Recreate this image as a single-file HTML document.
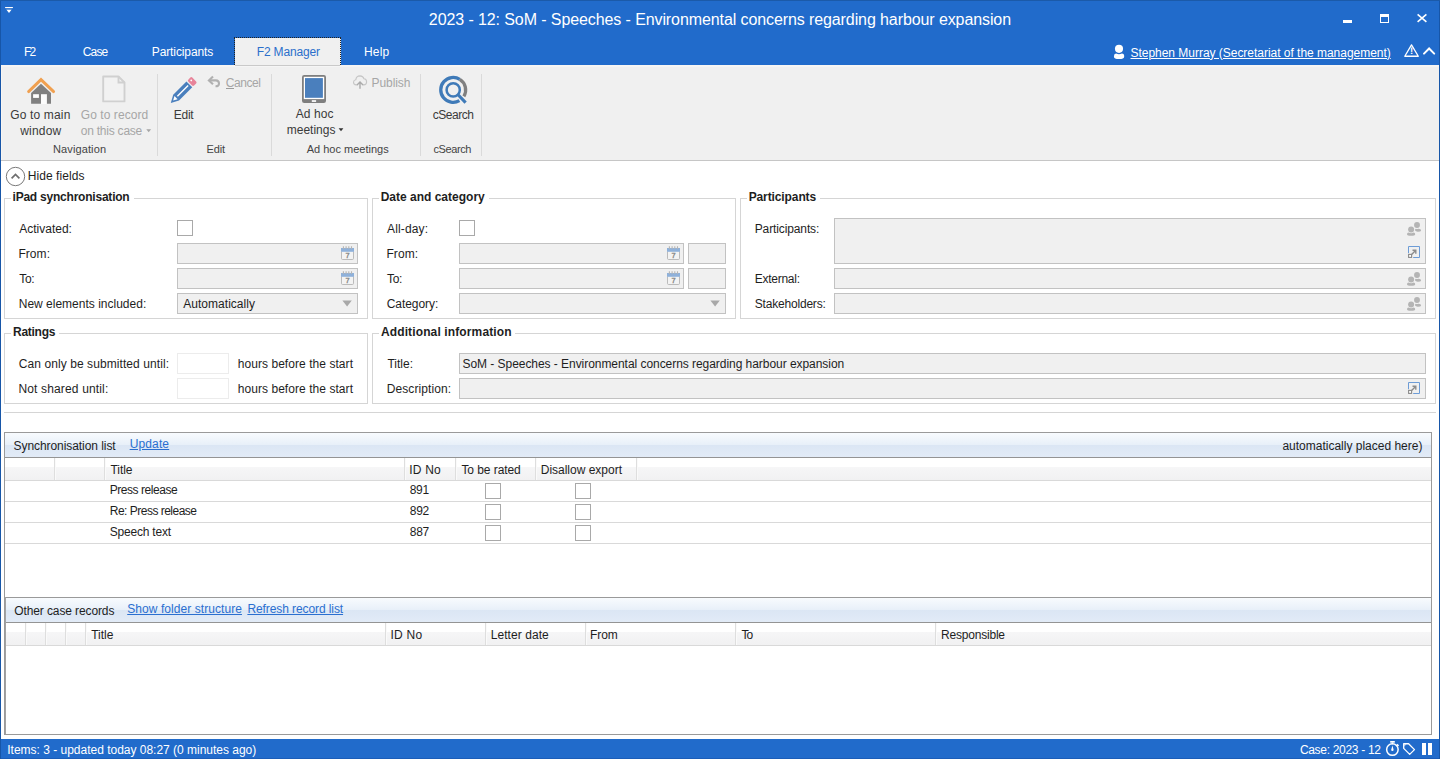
<!DOCTYPE html>
<html lang="en"><head><meta charset="utf-8"><title>F2 Manager</title>
<style>
html,body{margin:0;padding:0}
body{width:1440px;height:759px;position:relative;overflow:hidden;background:#fff;font-family:"Liberation Sans",sans-serif;font-size:12px;color:#1e1e1e}
.a,.t,svg{position:absolute}
.t{white-space:pre}
.blue{background:#216bcb}
.fs{border:1px solid #d5d5d5;box-sizing:border-box}
.lg{background:#fff;height:3px}
.in{box-sizing:border-box;border:1px solid #c2c2c2;background:#f0f0f0}
.inw{box-sizing:border-box;border:1px solid #ececec;background:#fff}
.cb{box-sizing:border-box;border:1px solid #a9a9a9;background:#fff;width:16px;height:16px}
.sep{width:1px;background:#dadada;top:74px;height:82px}
.ph{background:linear-gradient(#f8fbfe 0,#e8f0f9 48%,#dbe6f4 50%,#e2ebf7 100%)}
.ch{background:linear-gradient(#fff 0,#fff 41%,#f6f6f7 42%,#f1f1f2 100%)}
.cs{width:1px;background:#dedede;box-shadow:1px 0 0 #fafafa}
.hl{height:1px;background:#d9d9d9}

</style></head>
<body>
<header class="titlebar">
<!-- title + tabs -->
<div class="a blue" style="left:0;top:0;width:1440px;height:65px"></div>
<div class="a" style="left:0;top:0;width:1440px;height:1px;background:#1b5aa9"></div>
<!-- qat -->
<svg style="left:4px;top:6px" width="10" height="8" viewBox="4 6 10 8"><rect x="5.1" y="7" width="7.8" height="1.1" fill="#fff"/><rect x="6" y="8.6" width="6" height="1" fill="#fff" opacity=".15"/><path d="M6.5 9.8H11.5L9 12.9z" fill="#fff"/></svg>
<!-- window controls -->
<div class="a" style="left:1343px;top:20px;width:9px;height:3px;background:#fff"></div>
<div class="a" style="left:1380px;top:14px;width:9px;height:9px;box-sizing:border-box;border:1px solid #fff;border-top-width:3px"></div>
<svg style="left:1416px;top:13px" width="12" height="11" viewBox="0 0 12 11"><path d="M1.6 1.3L10.4 8.9M10.4 1.3L1.6 8.9" stroke="#fff" stroke-width="1.6" fill="none"/></svg>
<!-- active tab -->
<div class="a" style="left:235px;top:38px;width:106px;height:27px;background:#f0f0f0"></div>
<div class="a" style="left:234px;top:37px;width:107px;height:28px;box-sizing:border-box;border:1px dotted #222;border-bottom:none"></div>
<!-- user -->
<svg style="left:1112px;top:43px" width="14" height="17" viewBox="1112 43 14 17"><circle cx="1119" cy="48.85" r="4.05" fill="#fff"/><path d="M1113.9 56.4Q1113.9 53.7 1116.1 53.6Q1119 55.1 1121.9 53.6Q1124.2 53.7 1124.2 56.4Q1124.2 59 1119 59Q1113.9 59 1113.9 56.4z" fill="#fff"/></svg>
<svg style="left:1402px;top:42px" width="19" height="17" viewBox="1402 42 19 17"><path d="M1411.5 44.9L1418.3 56.25H1404.8z" fill="none" stroke="#fff" stroke-width="1.3" stroke-linejoin="round"/><text x="1411.55" y="54.15" font-family="Liberation Sans,sans-serif" font-size="9.5" font-weight="700" fill="#fff" text-anchor="middle" text-rendering="geometricPrecision">!</text></svg>
<svg style="left:1422px;top:45px" width="15" height="11" viewBox="1422 45 15 11"><path d="M1424 53.6L1429.1 48.5L1434.2 53.6" fill="none" stroke="#fff" stroke-width="2" stroke-linecap="round" stroke-linejoin="miter"/></svg>
<span class="t" id="t0" style="left:428.85px;top:8.46px;font-size:16px;line-height:24px;color:#fff;letter-spacing:-0.097px;">2023 - 12: SoM - Speeches - Environmental concerns regarding harbour expansion</span>
<span class="t" id="t1" style="left:23.88px;top:42.84px;font-size:12px;line-height:18px;color:#fff;letter-spacing:-1.726px;">F2</span>
<span class="t" id="t2" style="left:82.81px;top:42.84px;font-size:12px;line-height:18px;color:#fff;letter-spacing:-0.851px;">Case</span>
<span class="t" id="t3" style="left:151.74px;top:42.84px;font-size:12px;line-height:18px;color:#fff;letter-spacing:-0.106px;">Participants</span>
<span class="t" id="t4" style="left:256.74px;top:42.84px;font-size:12px;line-height:18px;color:#2b6fcb;letter-spacing:-0.153px;">F2 Manager</span>
<span class="t" id="t5" style="left:363.88px;top:42.84px;font-size:12px;line-height:18px;color:#fff;letter-spacing:0.214px;">Help</span>
<span class="t" id="t6" style="left:1130.51px;top:43.54px;font-size:12px;line-height:18px;color:#fff;letter-spacing:-0.027px;text-decoration:underline;text-underline-offset:1px;">Stephen Murray (Secretariat of the management)</span>
</header>
<nav class="ribbon">
<!-- ribbon -->
<div class="a" style="left:0;top:65px;width:1440px;height:95px;background:#f0f0f0"></div>
<div class="a" style="left:0;top:160px;width:1440px;height:1px;background:#c6c6c6"></div>
<div class="a" style="left:1px;top:65px;width:1438px;height:1px;background:#f7f5f3"></div>
<div class="a" style="left:1px;top:66px;width:1438px;height:1px;background:#f5f5f5"></div>
<div class="a" style="left:235px;top:65px;width:105px;height:1px;background:#c9c9c9"></div>
<div class="a" style="left:1px;top:66px;width:1px;height:94px;background:#f8f6f3"></div>
<div class="a sep" style="left:157px"></div>
<div class="a sep" style="left:271px"></div>
<div class="a sep" style="left:420px"></div>
<div class="a sep" style="left:481px"></div>
<!-- home icon -->
<svg style="left:26px;top:76px" width="30" height="29" viewBox="26 76 30 29">
<path d="M41 83.8L51 93V103.8H31.1V93z" fill="#808080"/>
<rect x="33.1" y="94.2" width="5.8" height="3.7" fill="#fff"/>
<rect x="41" y="94.2" width="5.9" height="9.8" fill="#fcfcfc"/>
<path d="M28.6 91.6L41 79.6L53.6 91.6" fill="none" stroke="#f0a050" stroke-width="2.9" stroke-linecap="round" stroke-linejoin="miter"/>
</svg>
<!-- doc icon -->
<svg style="left:101px;top:74px" width="26" height="30" viewBox="101 74 26 30">
<path d="M103.2 76.5H118.5L124.5 82.5V101.4H103.2z" fill="#f2f2f2" stroke="#d0d0d0" stroke-width="1.9" stroke-linejoin="round"/>
<path d="M118.5 76.5V82.5H124.5" fill="none" stroke="#d0d0d0" stroke-width="1.9"/>
</svg>
<!-- dropdown arrows -->
<svg style="left:146px;top:129px" width="6" height="4" viewBox="0 0 6 4"><path d="M0.3 0.3H5.1L2.7 3.2z" fill="#a6a6a6"/></svg>
<svg style="left:338px;top:128px" width="6" height="4" viewBox="0 0 6 4"><path d="M0.6 0.3H5.4L3 3.2z" fill="#333"/></svg>
<!-- pencil -->
<svg style="left:168px;top:75px" width="31" height="30" viewBox="168 75 31 30">
<g transform="translate(170.8 102.9) rotate(-45)">
<path d="M0 0L7.5 -4.1H26.2V4.1H7.5z" fill="#4a7fbd"/>
<path d="M3.3 0L7.4 -2.2V2.2z" fill="#fff"/>
<rect x="9.3" y="-0.75" width="15.2" height="1.5" fill="#fff"/>
<rect x="27.4" y="-4.1" width="5.7" height="8.2" rx="1.4" fill="#e8849a"/>
<circle cx="30.3" cy="-1.4" r="0.9" fill="#fff"/>
</g>
</svg>
<!-- cancel arrow -->
<svg style="left:207px;top:75px" width="15" height="13" viewBox="207 75 15 13">
<path d="M213 76.4L208.9 80.4L213 84.2" fill="none" stroke="#b0b0b0" stroke-width="2.1"/>
<path d="M209 80.4H215.8Q219 80.6 219 83.5Q219 86.3 215.5 86.2" fill="none" stroke="#b0b0b0" stroke-width="2.1"/>
</svg>
<div class="a" style="left:226px;top:88px;width:8px;height:1px;background:#9c9c9c"></div>
<!-- tablet -->
<svg style="left:302px;top:75px" width="24" height="28" viewBox="0 0 24 28">
<rect x="0" y="0" width="24" height="28" rx="2.2" fill="#7f7f7f"/>
<rect x="1.8" y="1.8" width="20.4" height="22.3" fill="#fff"/>
<rect x="3" y="3.1" width="17.9" height="19.7" fill="#4a7fbd"/>
<rect x="9.8" y="25.2" width="4.3" height="1.7" fill="#fff"/>
</svg>
<!-- cloud -->
<svg style="left:352px;top:74px" width="17" height="16" viewBox="352 74 17 16">
<path d="M357.5 84.9H356.2Q353.5 84.7 353.5 82.2Q353.6 80 355.8 79.7Q356.2 76 360 75.9Q363.2 76 364 78.8Q366.6 79 366.6 81.9Q366.5 84.7 363.8 84.9H362.6" fill="none" stroke="#c6c6c6" stroke-width="1.1"/>
<path d="M360 88.7V82.6M357 85.1L360 82.1L363 85.1" fill="none" stroke="#ababab" stroke-width="1.4"/>
</svg>
<!-- csearch -->
<svg style="left:437px;top:74px" width="32" height="31" viewBox="437 74 32 31">
<g fill="none">
<path d="M459.43 100.68A12.45 12.45 0 1 1 459.8 79.34" stroke="#3f7ab8" stroke-width="3.3"/>
<path d="M459.8 79.34A12.45 12.45 0 0 1 463.87 96.31" stroke="#808080" stroke-width="3.3"/>
<circle cx="453.2" cy="89.9" r="6.6" stroke="#3f7ab8" stroke-width="2.5"/>
<path d="M457.6 94.2L465.6 102.6" stroke="#3f7ab8" stroke-width="3.1"/>
</g>
</svg>
<span class="t" id="t7" style="left:10.28px;top:105.84px;font-size:12px;line-height:18px;color:#3a3a3a;letter-spacing:0.152px;">Go to main</span>
<span class="t" id="t8" style="left:20.27px;top:121.84px;font-size:12px;line-height:18px;color:#3a3a3a;letter-spacing:0.179px;">window</span>
<span class="t" id="t9" style="left:80.76px;top:105.84px;font-size:12px;line-height:18px;color:#a6a6a6;letter-spacing:0.073px;">Go to record</span>
<span class="t" id="t10" style="left:80.72px;top:121.84px;font-size:12px;line-height:18px;color:#a6a6a6;letter-spacing:-0.225px;">on this case</span>
<span class="t" id="t11" style="left:52.97px;top:140.69px;font-size:11px;line-height:16px;color:#444;letter-spacing:0.119px;">Navigation</span>
<span class="t" id="t12" style="left:173.74px;top:105.84px;font-size:12px;line-height:18px;color:#3a3a3a;letter-spacing:-0.261px;">Edit</span>
<span class="t" id="t13" style="left:225.73px;top:73.84px;font-size:12px;line-height:18px;color:#a6a6a6;letter-spacing:-0.447px;">Cancel</span>
<span class="t" id="t14" style="left:206.52px;top:140.69px;font-size:11px;line-height:16px;color:#444;letter-spacing:-0.116px;">Edit</span>
<span class="t" id="t15" style="left:295.63px;top:104.84px;font-size:12px;line-height:18px;color:#3a3a3a;letter-spacing:0.120px;">Ad hoc</span>
<span class="t" id="t16" style="left:286.70px;top:120.84px;font-size:12px;line-height:18px;color:#3a3a3a;letter-spacing:0.016px;">meetings</span>
<span class="t" id="t17" style="left:371.44px;top:73.84px;font-size:12px;line-height:18px;color:#a6a6a6;letter-spacing:-0.051px;">Publish</span>
<span class="t" id="t18" style="left:306.68px;top:140.69px;font-size:11px;line-height:16px;color:#444;letter-spacing:0.005px;">Ad hoc meetings</span>
<span class="t" id="t19" style="left:432.69px;top:105.84px;font-size:12px;line-height:18px;color:#3a3a3a;letter-spacing:-0.468px;">cSearch</span>
<span class="t" id="t20" style="left:433.44px;top:140.69px;font-size:11px;line-height:16px;color:#444;letter-spacing:-0.384px;">cSearch</span>
</nav>
<main class="fields">
<!-- hide fields -->
<svg style="left:5px;top:166px" width="21" height="21" viewBox="0 0 21 21"><circle cx="10.5" cy="10.5" r="9.2" fill="#fff" stroke="#7a7a7a" stroke-width="1"/><path d="M6.6 12.3L10.5 8.4L14.4 12.3" fill="none" stroke="#6e6e6e" stroke-width="1.7"/></svg>

<!-- fieldsets -->
<div class="a fs" style="left:4px;top:198px;width:364px;height:121px"></div>
<div class="a fs" style="left:372px;top:198px;width:364px;height:121px"></div>
<div class="a fs" style="left:740px;top:198px;width:696px;height:121px"></div>
<div class="a fs" style="left:4px;top:333px;width:364px;height:71px"></div>
<div class="a fs" style="left:372px;top:333px;width:1064px;height:71px"></div>
<div class="a lg" style="left:11px;top:197px;width:123px"></div>
<div class="a lg" style="left:379px;top:197px;width:110px"></div>
<div class="a lg" style="left:747px;top:197px;width:73px"></div>
<div class="a lg" style="left:11px;top:332px;width:48px"></div>
<div class="a lg" style="left:379px;top:332px;width:136px"></div>

<!-- iPad sync -->
<div class="a cb" style="left:177px;top:220px"></div>
<div class="a in" style="left:177px;top:243px;width:181px;height:21px"></div>
<div class="a in" style="left:177px;top:268px;width:181px;height:21px"></div>
<div class="a in" style="left:177px;top:293px;width:181px;height:21px"></div>
<svg style="left:342px;top:300px" width="11" height="7" viewBox="0 0 11 7"><path d="M0.4 0.6H9.8L5.1 6.6z" fill="#a8a8a8"/></svg>
<!-- date & category -->
<div class="a cb" style="left:459px;top:220px"></div>
<div class="a in" style="left:459px;top:243px;width:225px;height:21px"></div>
<div class="a in" style="left:688px;top:243px;width:38px;height:21px"></div>
<div class="a in" style="left:459px;top:268px;width:225px;height:21px"></div>
<div class="a in" style="left:688px;top:268px;width:38px;height:21px"></div>
<div class="a in" style="left:459px;top:293px;width:267px;height:21px"></div>
<svg style="left:710px;top:300px" width="11" height="7" viewBox="0 0 11 7"><path d="M0.4 0.6H9.8L5.1 6.6z" fill="#a8a8a8"/></svg>
<!-- participants -->
<div class="a in" style="left:834px;top:218px;width:592px;height:46px"></div>
<div class="a in" style="left:834px;top:268px;width:592px;height:21px"></div>
<div class="a in" style="left:834px;top:293px;width:592px;height:21px"></div>
<!-- ratings -->
<div class="a inw" style="left:177px;top:353px;width:52px;height:21px"></div>
<div class="a inw" style="left:177px;top:378px;width:52px;height:21px"></div>
<!-- additional info -->
<div class="a in" style="left:459px;top:353px;width:967px;height:21px"></div>
<div class="a in" style="left:459px;top:378px;width:967px;height:21px"></div>

<!-- symbols -->

<svg style="left:341px;top:246px" width="13" height="14"><g>
<path d="M0.5 5.5V12.4Q0.5 13.5 1.6 13.5H11.4Q12.5 13.5 12.5 12.4V5.5" fill="#f3f3f3" stroke="#b4b4b4" stroke-width="0.9"/>
<rect x="0" y="2" width="13" height="3.8" fill="#8fb1da"/>
<path d="M2.4 0.2v2.8M5.1 0.2v2.8M7.8 0.2v2.8M10.5 0.2v2.8" stroke="#b4b4b4" stroke-width="1.1"/>
<text x="6.6" y="12.4" font-family="Liberation Sans,sans-serif" font-size="7.4" fill="#888" stroke="#888" stroke-width="0.35" text-anchor="middle">7</text>
</g></svg>
<svg style="left:341px;top:271px" width="13" height="14"><g>
<path d="M0.5 5.5V12.4Q0.5 13.5 1.6 13.5H11.4Q12.5 13.5 12.5 12.4V5.5" fill="#f3f3f3" stroke="#b4b4b4" stroke-width="0.9"/>
<rect x="0" y="2" width="13" height="3.8" fill="#8fb1da"/>
<path d="M2.4 0.2v2.8M5.1 0.2v2.8M7.8 0.2v2.8M10.5 0.2v2.8" stroke="#b4b4b4" stroke-width="1.1"/>
<text x="6.6" y="12.4" font-family="Liberation Sans,sans-serif" font-size="7.4" fill="#888" stroke="#888" stroke-width="0.35" text-anchor="middle">7</text>
</g></svg>
<svg style="left:667px;top:246px" width="13" height="14"><g>
<path d="M0.5 5.5V12.4Q0.5 13.5 1.6 13.5H11.4Q12.5 13.5 12.5 12.4V5.5" fill="#f3f3f3" stroke="#b4b4b4" stroke-width="0.9"/>
<rect x="0" y="2" width="13" height="3.8" fill="#8fb1da"/>
<path d="M2.4 0.2v2.8M5.1 0.2v2.8M7.8 0.2v2.8M10.5 0.2v2.8" stroke="#b4b4b4" stroke-width="1.1"/>
<text x="6.6" y="12.4" font-family="Liberation Sans,sans-serif" font-size="7.4" fill="#888" stroke="#888" stroke-width="0.35" text-anchor="middle">7</text>
</g></svg>
<svg style="left:667px;top:271px" width="13" height="14"><g>
<path d="M0.5 5.5V12.4Q0.5 13.5 1.6 13.5H11.4Q12.5 13.5 12.5 12.4V5.5" fill="#f3f3f3" stroke="#b4b4b4" stroke-width="0.9"/>
<rect x="0" y="2" width="13" height="3.8" fill="#8fb1da"/>
<path d="M2.4 0.2v2.8M5.1 0.2v2.8M7.8 0.2v2.8M10.5 0.2v2.8" stroke="#b4b4b4" stroke-width="1.1"/>
<text x="6.6" y="12.4" font-family="Liberation Sans,sans-serif" font-size="7.4" fill="#888" stroke="#888" stroke-width="0.35" text-anchor="middle">7</text>
</g></svg>
<svg style="left:1407px;top:221.7px" width="15" height="15"><g fill="#b4b4b4">
<circle cx="10" cy="3.05" r="2.95"/>
<path d="M7.9 8.2Q7.9 6.8 8.9 6.7Q10 7.5 11.3 6.7Q14.2 6.9 14.1 8.6Q13.9 9.9 10.6 9.8Q8.8 9.2 7.9 8.2z"/>
<circle cx="4.1" cy="7.5" r="3"/>
<path d="M0 12.3Q0 10.7 1.5 10.6Q4.1 12.1 6.7 10.6Q8.2 10.7 8.2 12.3Q8.1 13.8 4.1 13.8Q0.1 13.8 0 12.3z"/>
</g></svg>
<svg style="left:1407px;top:271.7px" width="15" height="15"><g fill="#b4b4b4">
<circle cx="10" cy="3.05" r="2.95"/>
<path d="M7.9 8.2Q7.9 6.8 8.9 6.7Q10 7.5 11.3 6.7Q14.2 6.9 14.1 8.6Q13.9 9.9 10.6 9.8Q8.8 9.2 7.9 8.2z"/>
<circle cx="4.1" cy="7.5" r="3"/>
<path d="M0 12.3Q0 10.7 1.5 10.6Q4.1 12.1 6.7 10.6Q8.2 10.7 8.2 12.3Q8.1 13.8 4.1 13.8Q0.1 13.8 0 12.3z"/>
</g></svg>
<svg style="left:1407px;top:296.7px" width="15" height="15"><g fill="#b4b4b4">
<circle cx="10" cy="3.05" r="2.95"/>
<path d="M7.9 8.2Q7.9 6.8 8.9 6.7Q10 7.5 11.3 6.7Q14.2 6.9 14.1 8.6Q13.9 9.9 10.6 9.8Q8.8 9.2 7.9 8.2z"/>
<circle cx="4.1" cy="7.5" r="3"/>
<path d="M0 12.3Q0 10.7 1.5 10.6Q4.1 12.1 6.7 10.6Q8.2 10.7 8.2 12.3Q8.1 13.8 4.1 13.8Q0.1 13.8 0 12.3z"/>
</g></svg>
<svg style="left:1408px;top:246px" width="12" height="12"><g fill="none">
<path d="M0.5 7.2V0.5H11.5V11.5H5.2" stroke="#6d9cd6" stroke-width="1"/>
<rect x="0.6" y="8.4" width="3" height="3" fill="#fff" stroke="#8a8a8a" stroke-width="1.1"/>
<path d="M3.6 8.4L7.6 4.4M4.5 4.3H7.8V7.7" stroke="#8c8c8c" stroke-width="1.4"/>
</g></svg>
<svg style="left:1408px;top:382px" width="12" height="12"><g fill="none">
<path d="M0.5 7.2V0.5H11.5V11.5H5.2" stroke="#6d9cd6" stroke-width="1"/>
<rect x="0.6" y="8.4" width="3" height="3" fill="#fff" stroke="#8a8a8a" stroke-width="1.1"/>
<path d="M3.6 8.4L7.6 4.4M4.5 4.3H7.8V7.7" stroke="#8c8c8c" stroke-width="1.4"/>
</g></svg>

<!-- hr -->
<div class="a" style="left:4px;top:412px;width:1432px;height:1px;background:#d5d5d5"></div>
<span class="t" id="t21" style="left:27.74px;top:166.84px;font-size:12px;line-height:18px;letter-spacing:0.074px;">Hide fields</span>
<span class="t" id="t22" style="left:12.53px;top:187.84px;font-size:12px;line-height:18px;font-weight:700;letter-spacing:-0.220px;">iPad synchronisation</span>
<span class="t" id="t23" style="left:19.29px;top:220.34px;font-size:12px;line-height:18px;letter-spacing:-0.009px;">Activated:</span>
<span class="t" id="t24" style="left:18.44px;top:245.34px;font-size:12px;line-height:18px;letter-spacing:0.052px;">From:</span>
<span class="t" id="t25" style="left:19.16px;top:270.34px;font-size:12px;line-height:18px;letter-spacing:-0.233px;">To:</span>
<span class="t" id="t26" style="left:18.74px;top:295.34px;font-size:12px;line-height:18px;letter-spacing:0.005px;">New elements included:</span>
<span class="t" id="t27" style="left:183.31px;top:295.34px;font-size:12px;line-height:18px;letter-spacing:0.022px;">Automatically</span>
<span class="t" id="t28" style="left:380.63px;top:187.84px;font-size:12px;line-height:18px;font-weight:700;letter-spacing:0.006px;">Date and category</span>
<span class="t" id="t29" style="left:387.02px;top:220.34px;font-size:12px;line-height:18px;letter-spacing:0.153px;">All-day:</span>
<span class="t" id="t30" style="left:386.47px;top:245.34px;font-size:12px;line-height:18px;letter-spacing:0.059px;">From:</span>
<span class="t" id="t31" style="left:387.05px;top:270.34px;font-size:12px;line-height:18px;letter-spacing:-0.344px;">To:</span>
<span class="t" id="t32" style="left:386.73px;top:295.34px;font-size:12px;line-height:18px;letter-spacing:-0.059px;">Category:</span>
<span class="t" id="t33" style="left:748.63px;top:187.84px;font-size:12px;line-height:18px;font-weight:700;letter-spacing:-0.102px;">Participants</span>
<span class="t" id="t34" style="left:754.74px;top:220.34px;font-size:12px;line-height:18px;letter-spacing:-0.122px;">Participants:</span>
<span class="t" id="t35" style="left:754.74px;top:270.34px;font-size:12px;line-height:18px;letter-spacing:-0.262px;">External:</span>
<span class="t" id="t36" style="left:754.69px;top:295.34px;font-size:12px;line-height:18px;letter-spacing:-0.186px;">Stakeholders:</span>
<span class="t" id="t37" style="left:13.02px;top:322.84px;font-size:12px;line-height:18px;font-weight:700;letter-spacing:-0.271px;">Ratings</span>
<span class="t" id="t38" style="left:18.73px;top:354.84px;font-size:12px;line-height:18px;letter-spacing:0.082px;">Can only be submitted until:</span>
<span class="t" id="t39" style="left:18.47px;top:379.84px;font-size:12px;line-height:18px;letter-spacing:0.150px;">Not shared until:</span>
<span class="t" id="t40" style="left:237.73px;top:354.84px;font-size:12px;line-height:18px;letter-spacing:0.057px;">hours before the start</span>
<span class="t" id="t41" style="left:237.73px;top:379.84px;font-size:12px;line-height:18px;letter-spacing:0.057px;">hours before the start</span>
<span class="t" id="t42" style="left:380.96px;top:322.84px;font-size:12px;line-height:18px;font-weight:700;letter-spacing:0.125px;">Additional information</span>
<span class="t" id="t43" style="left:387.42px;top:354.84px;font-size:12px;line-height:18px;letter-spacing:0.025px;">Title:</span>
<span class="t" id="t44" style="left:386.74px;top:379.84px;font-size:12px;line-height:18px;letter-spacing:0.081px;">Description:</span>
<span class="t" id="t45" style="left:462.51px;top:354.84px;font-size:12px;line-height:18px;letter-spacing:-0.048px;">SoM - Speeches - Environmental concerns regarding harbour expansion</span>
</main>
<section class="lists">
<!-- lists container -->
<div class="a" style="left:4px;top:432px;width:1428px;height:303px;box-sizing:border-box;border:1px solid #9a9a9a"></div>
<!-- sync header -->
<div class="a ph" style="left:5px;top:433px;width:1426px;height:24px"></div>
<div class="a" style="left:5px;top:457px;width:1426px;height:1px;background:#949494"></div>
<div class="a ch" style="left:5px;top:458px;width:1426px;height:22px"></div>
<div class="a hl" style="left:5px;top:480px;width:1426px"></div>
<div class="a cs" style="left:54px;top:458px;height:22px"></div>
<div class="a cs" style="left:104px;top:458px;height:22px"></div>
<div class="a cs" style="left:404px;top:458px;height:22px"></div>
<div class="a cs" style="left:455px;top:458px;height:22px"></div>
<div class="a cs" style="left:535px;top:458px;height:22px"></div>
<div class="a cs" style="left:636px;top:458px;height:22px"></div>
<div class="a hl" style="left:5px;top:501px;width:1426px"></div>
<div class="a hl" style="left:5px;top:522px;width:1426px"></div>
<div class="a hl" style="left:5px;top:543px;width:1426px"></div>
<div class="a cb" style="left:485px;top:483px"></div>
<div class="a cb" style="left:575px;top:483px"></div>
<div class="a cb" style="left:485px;top:504px"></div>
<div class="a cb" style="left:575px;top:504px"></div>
<div class="a cb" style="left:485px;top:525px"></div>
<div class="a cb" style="left:575px;top:525px"></div>
<!-- other records header -->
<div class="a" style="left:5px;top:597px;width:1426px;height:1px;background:#9a9a9a"></div>
<div class="a ph" style="left:5px;top:598px;width:1426px;height:24px"></div>
<div class="a" style="left:5px;top:622px;width:1426px;height:1px;background:#949494"></div>
<div class="a ch" style="left:5px;top:623px;width:1426px;height:22px"></div>
<div class="a hl" style="left:5px;top:645px;width:1426px"></div>
<div class="a cs" style="left:25px;top:623px;height:22px"></div>
<div class="a cs" style="left:45px;top:623px;height:22px"></div>
<div class="a cs" style="left:65px;top:623px;height:22px"></div>
<div class="a cs" style="left:85px;top:623px;height:22px"></div>
<div class="a cs" style="left:385px;top:623px;height:22px"></div>
<div class="a cs" style="left:485px;top:623px;height:22px"></div>
<div class="a cs" style="left:585px;top:623px;height:22px"></div>
<div class="a cs" style="left:735px;top:623px;height:22px"></div>
<div class="a cs" style="left:935px;top:623px;height:22px"></div>

<div class="a" style="left:5px;top:597px;width:1px;height:137px;background:#a2a2a2"></div>
<span class="t" id="t46" style="left:13.51px;top:436.54px;font-size:12px;line-height:18px;letter-spacing:-0.063px;">Synchronisation list</span>
<span class="t" id="t47" style="left:129.68px;top:434.84px;font-size:12px;line-height:18px;color:#2a6fd0;letter-spacing:0.136px;text-decoration:underline;text-underline-offset:1px;">Update</span>
<span class="t" id="t48" style="left:1282.44px;top:436.54px;font-size:12px;line-height:18px;letter-spacing:-0.005px;">automatically placed here)</span>
<span class="t" id="t49" style="left:110.42px;top:461.14px;font-size:12px;line-height:18px;letter-spacing:-0.022px;">Title</span>
<span class="t" id="t50" style="left:409.25px;top:461.14px;font-size:12px;line-height:18px;letter-spacing:0.184px;">ID No</span>
<span class="t" id="t51" style="left:461.42px;top:461.14px;font-size:12px;line-height:18px;letter-spacing:-0.065px;">To be rated</span>
<span class="t" id="t52" style="left:540.74px;top:461.14px;font-size:12px;line-height:18px;letter-spacing:-0.007px;">Disallow export</span>
<span class="t" id="t53" style="left:109.74px;top:481.34px;font-size:12px;line-height:18px;letter-spacing:-0.459px;">Press release</span>
<span class="t" id="t54" style="left:109.74px;top:502.34px;font-size:12px;line-height:18px;letter-spacing:-0.504px;">Re: Press release</span>
<span class="t" id="t55" style="left:109.69px;top:523.34px;font-size:12px;line-height:18px;letter-spacing:-0.198px;">Speech text</span>
<span class="t" id="t56" style="left:409.71px;top:481.34px;font-size:12px;line-height:18px;letter-spacing:-0.302px;">891</span>
<span class="t" id="t57" style="left:409.71px;top:502.34px;font-size:12px;line-height:18px;letter-spacing:-0.222px;">892</span>
<span class="t" id="t58" style="left:409.71px;top:523.34px;font-size:12px;line-height:18px;letter-spacing:-0.222px;">887</span>
<span class="t" id="t59" style="left:14.32px;top:601.84px;font-size:12px;line-height:18px;letter-spacing:-0.116px;">Other case records</span>
<span class="t" id="t60" style="left:127.23px;top:600.34px;font-size:12px;line-height:18px;color:#2a6fd0;letter-spacing:0.065px;text-decoration:underline;text-underline-offset:1px;">Show folder structure</span>
<span class="t" id="t61" style="left:247.38px;top:600.34px;font-size:12px;line-height:18px;color:#2a6fd0;letter-spacing:-0.089px;text-decoration:underline;text-underline-offset:1px;">Refresh record list</span>
<span class="t" id="t62" style="left:91.14px;top:625.54px;font-size:12px;line-height:18px;letter-spacing:0.014px;">Title</span>
<span class="t" id="t63" style="left:390.56px;top:625.54px;font-size:12px;line-height:18px;letter-spacing:0.242px;">ID No</span>
<span class="t" id="t64" style="left:490.74px;top:625.54px;font-size:12px;line-height:18px;letter-spacing:0.065px;">Letter date</span>
<span class="t" id="t65" style="left:589.99px;top:625.54px;font-size:12px;line-height:18px;letter-spacing:-0.070px;">From</span>
<span class="t" id="t66" style="left:741.42px;top:625.54px;font-size:12px;line-height:18px;letter-spacing:-0.825px;">To</span>
<span class="t" id="t67" style="left:940.99px;top:625.54px;font-size:12px;line-height:18px;letter-spacing:-0.201px;">Responsible</span>
</section>
<footer class="statusbar">
<!-- status bar -->
<div class="a blue" style="left:0;top:739px;width:1440px;height:20px"></div>
<div class="a" style="left:0;top:758px;width:1440px;height:1px;background:#1b5db8"></div>
<svg style="left:1384px;top:740px" width="17" height="18" viewBox="1384 740 17 18">
<circle cx="1392.4" cy="749.6" r="5.75" fill="none" stroke="#fff" stroke-width="1.5"/>
<rect x="1390.2" y="741" width="4.6" height="1.7" fill="#fff"/>
<rect x="1391.8" y="742.5" width="1.3" height="1.8" fill="#fff"/>
<path d="M1396.9 744.4L1398.5 746" stroke="#fff" stroke-width="1.6" fill="none"/>
<path d="M1392.4 745.4L1393.6 749.8Q1393.6 751 1392.4 751Q1391.2 751 1391.2 749.8z" fill="#fff"/>
</svg>
<svg style="left:1402px;top:742px" width="15" height="15" viewBox="1402 742 15 15">
<path d="M1403.7 743.75H1408.6L1414.5 749.6L1409.7 754.4L1403.7 748.4z" fill="none" stroke="#fff" stroke-width="1.3" stroke-linejoin="round"/>
<path d="M1404.3 744.3H1406.4L1404.3 746.4z" fill="#fff" opacity="0.75"/>
</svg>
<div class="a" style="left:1422px;top:743px;width:4px;height:12px;background:#fff"></div>
<div class="a" style="left:1428px;top:743px;width:4px;height:12px;background:#fff"></div>
<span class="t" id="t68" style="left:7.31px;top:740.64px;font-size:12px;line-height:18px;color:#fff;letter-spacing:-0.011px;">Items: 3 - updated today 08:27 (0 minutes ago)</span>
<span class="t" id="t69" style="left:1299.88px;top:740.74px;font-size:12px;line-height:18px;color:#fff;letter-spacing:-0.306px;">Case: 2023 - 12</span>
</footer>
<div class="frame">
<!-- window borders -->
<div class="a" style="left:0;top:1px;width:1px;height:758px;background:#1756a8"></div>
<div class="a" style="left:1439px;top:1px;width:1px;height:758px;background:#1756a8"></div>

</div>
</body></html>
